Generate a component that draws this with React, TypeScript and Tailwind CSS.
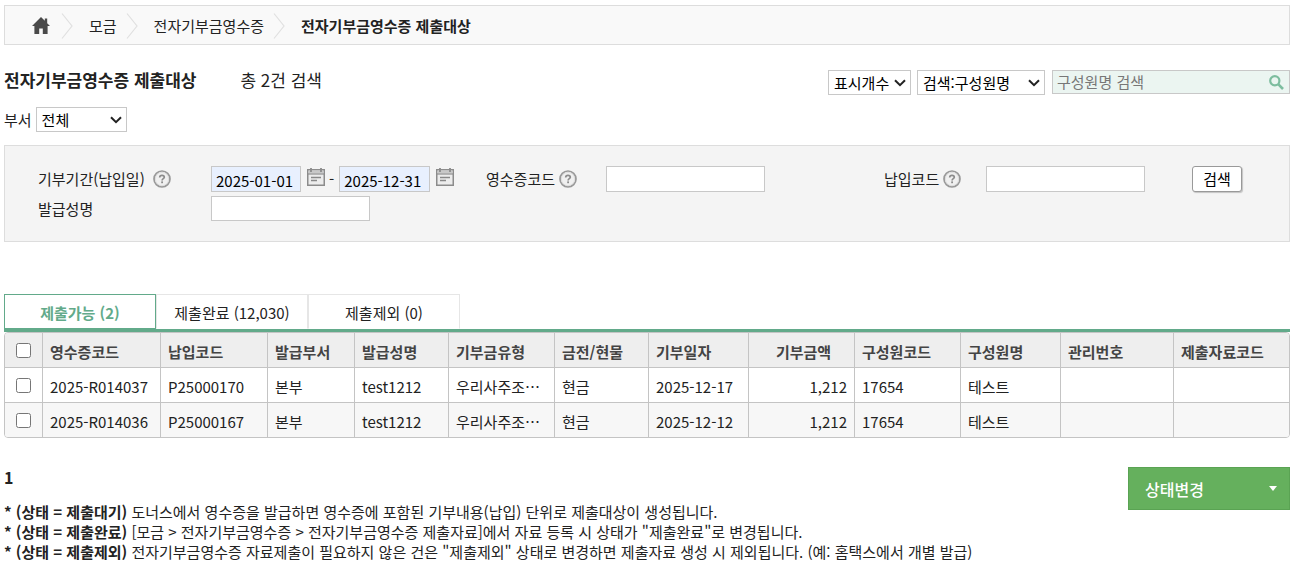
import { useState } from "react";

const columns = [
  { label: "영수증코드", width: "w-[118px]" },
  { label: "납입코드", width: "w-[107px]" },
  { label: "발급부서", width: "w-[87px]" },
  { label: "발급성명", width: "w-[94px]" },
  { label: "기부금유형", width: "w-[106px]" },
  { label: "금전/현물", width: "w-[94px]" },
  { label: "기부일자", width: "w-[100px]" },
  { label: "기부금액", width: "w-[106px]", center: true },
  { label: "구성원코드", width: "w-[106px]" },
  { label: "구성원명", width: "w-[100px]" },
  { label: "관리번호", width: "w-[113px]" },
  { label: "제출자료코드", width: "" },
];

const rows = [
  ["2025-R014037", "P25000170", "본부", "test1212", "우리사주조…", "현금", "2025-12-17", "1,212", "17654", "테스트", "", ""],
  ["2025-R014036", "P25000167", "본부", "test1212", "우리사주조…", "현금", "2025-12-12", "1,212", "17654", "테스트", "", ""],
];

const tabs = ["제출가능 (2)", "제출완료 (12,030)", "제출제외 (0)"];

const notes = [
  {
    status: "제출대기",
    text: "도너스에서 영수증을 발급하면 영수증에 포함된 기부내용(납입) 단위로 제출대상이 생성됩니다.",
  },
  {
    status: "제출완료",
    text: '[모금 > 전자기부금영수증 > 전자기부금영수증 제출자료]에서 자료 등록 시 상태가 "제출완료"로 변경됩니다.',
  },
  {
    status: "제출제외",
    text: '전자기부금영수증 자료제출이 필요하지 않은 건은 "제출제외" 상태로 변경하면 제출자료 생성 시 제외됩니다. (예: 홈택스에서 개별 발급)',
  },
];

const fieldClass = "border border-[#c8c8c8] bg-white px-1 outline-none";
const dateClass = "h-[26px] border border-[#c8c8c8] bg-[#e8f0fe] px-1 pt-0.5 text-black outline-none";

function Select({ id, label, value, className }: { id?: string; label?: string; value: string; className: string }) {
  return (
    <div className={`relative ${className}`}>
      <select
        id={id}
        aria-label={label}
        className="block h-[25px] w-full appearance-none border border-[#c8c8c8] bg-white pl-[5px] text-black outline-none"
      >
        <option>{value}</option>
      </select>
      <svg
        className="pointer-events-none absolute top-[9px] right-[5px] h-2 w-3"
        viewBox="0 0 12 8"
        fill="none"
        stroke="#222"
        strokeWidth="2"
      >
        <path d="M1 1.2 6 6.2 11 1.2" />
      </svg>
    </div>
  );
}

function Chevron() {
  return (
    <svg className="mr-4 ml-[9px] h-[26px] w-3" viewBox="0 0 12 26" fill="none" stroke="#e0e0e0" strokeWidth="1.2">
      <path d="M1 0.5 11 13 1 25.5" />
    </svg>
  );
}

function HelpIcon() {
  return (
    <svg className="size-[18px] shrink-0" viewBox="0 0 18 18" fill="none">
      <circle cx="9" cy="9" r="8" fill="#f0f0f0" stroke="#999" strokeWidth="1.7" />
      <circle cx="9" cy="9" r="6.6" stroke="#dadada" strokeWidth="0.8" />
      <path d="M6.7 7.5C6.7 6 7.6 5.3 9 5.3s2.3.7 2.3 1.9c0 1.5-2.2 1.5-2.2 3.3" stroke="#8c8c8c" strokeWidth="1.7" />
      <rect x="8.2" y="11.4" width="1.8" height="1.8" fill="#8c8c8c" />
    </svg>
  );
}

function CalendarButton({ label }: { label: string }) {
  return (
    <button type="button" aria-label={label} className="mb-1 shrink-0">
      <svg className="block h-[18px] w-[18px]" viewBox="0 0 18 18" fill="none">
        <rect x="0.75" y="1.75" width="16.5" height="15.5" fill="#ececec" stroke="#8c8c8c" strokeWidth="1.5" />
        <path d="M1.5 2.5h15v3h-15z" fill="#c8c8c8" />
        <path d="M1 6h16" stroke="#909090" strokeWidth="1.2" />
        <path d="M4 0v4M14 0v4" stroke="#8c8c8c" strokeWidth="1.8" />
        <path d="M4 9.5h10M4 12.5h6" stroke="#888" strokeWidth="1.5" />
      </svg>
    </button>
  );
}

export default function App() {
  const [tab, setTab] = useState(0);
  const [checked, setChecked] = useState<number[]>([]);

  const toggle = (i: number) =>
    setChecked(checked.includes(i) ? checked.filter((n) => n !== i) : [...checked, i]);

  return (
    <div
      lang="ko"
      className="bg-white pt-[5px] pr-[7px] pl-1 font-['Noto_Sans_CJK_KR',sans-serif] text-[15px] leading-5 text-[#222]"
    >
      <nav className="flex h-10 items-center border border-[#ddd] bg-[#f9f9f9] pt-px pl-[27px]">
        <a href="#" aria-label="홈" className="mr-0.5">
          <svg className="h-[17px] w-[18px]" viewBox="0 0 18 17" fill="#4a4a4a">
            <path d="M9 0 0 9h2.4v8h4.8v-5.4h3.6V17h4.8V9H18l-2.8-2.8V1.6h-2.4v2.2z" />
          </svg>
        </a>
        <Chevron />
        <a href="#">모금</a>
        <Chevron />
        <a href="#">전자기부금영수증</a>
        <Chevron />
        <strong>전자기부금영수증 제출대상</strong>
      </nav>

      <div className="mt-[25px] flex items-start">
        <h1 className="text-[17px] font-bold">전자기부금영수증 제출대상</h1>
        <span className="ml-11 text-[17px]">총 2건 검색</span>
        <div className="ml-auto flex items-start">
          <Select label="표시개수" value="표시개수" className="w-[83px]" />
          <Select label="검색 조건" value="검색:구성원명" className="ml-1.5 w-32" />
          <form
            className="ml-[7px] flex h-6 w-[238px] items-center border border-[#c8c8c8] bg-[#ebf5f1]"
            onSubmit={(e) => e.preventDefault()}
          >
            <input
              type="text"
              aria-label="구성원명 검색"
              placeholder="구성원명 검색"
              className="min-w-0 flex-1 bg-transparent pl-1 outline-none placeholder:text-[#777]"
            />
            <button type="submit" aria-label="검색" className="mr-[5px]">
              <svg className="block size-[15px]" viewBox="0 0 15 15" fill="none" stroke="#7dbd9f">
                <circle cx="5.8" cy="5.8" r="4.6" strokeWidth="2.2" />
                <path d="m9.2 9.2 4.8 4.8" strokeWidth="2.6" />
              </svg>
            </button>
          </form>
        </div>
      </div>

      <div className="mt-3 flex items-center">
        <label htmlFor="dept">부서</label>
        <Select id="dept" value="전체" className="ml-1 w-[91px]" />
      </div>

      <form
        className="mt-[13px] grid grid-cols-[173fr_275fr_120fr_278fr_102fr_206fr_97fr] items-center gap-y-1 border border-[#ddd] bg-[#f4f4f4] py-5 pl-[33px]"
        onSubmit={(e) => e.preventDefault()}
      >
        <div className="flex items-center gap-2">
          <label htmlFor="from">기부기간(납입일)</label>
          <HelpIcon />
        </div>
        <div className="flex items-center">
          <input id="from" defaultValue="2025-01-01" className={`${dateClass} w-[90px]`} />
          <span className="mr-[5px] ml-1.5 flex items-center gap-1">
            <CalendarButton label="시작일 선택" />-
          </span>
          <input aria-label="종료일" defaultValue="2025-12-31" className={`${dateClass} mr-1.5 w-[91px]`} />
          <CalendarButton label="종료일 선택" />
        </div>
        <div className="flex items-center gap-1">
          <label htmlFor="receipt">영수증코드</label>
          <HelpIcon />
        </div>
        <input id="receipt" className={`${fieldClass} h-[26px] w-[159px]`} />
        <div className="flex items-center gap-1">
          <label htmlFor="payment">납입코드</label>
          <HelpIcon />
        </div>
        <input id="payment" className={`${fieldClass} h-[26px] w-[159px]`} />
        <button
          type="submit"
          className="h-[26px] w-[50px] rounded-[3px] border border-[#999] bg-white text-black shadow-[1px_1px_1px_rgba(0,0,0,0.2)]"
        >
          검색
        </button>
        <label htmlFor="issuer">발급성명</label>
        <input id="issuer" className={`${fieldClass} h-[25px] w-[159px]`} />
      </form>

      <div className="mt-[52px] flex border-b-3 border-[#62aa8a]" role="tablist">
        {tabs.map((name, i) => (
          <button
            key={name}
            type="button"
            role="tab"
            aria-selected={tab === i}
            onClick={() => setTab(i)}
            className={`h-[35px] w-[152px] border pt-0.5 ${
              tab === i
                ? "border-[#62aa8a] font-bold text-[#62aa8a]"
                : "border-[#e6e6e6] border-b-transparent text-[#222]"
            }`}
          >
            {name}
          </button>
        ))}
      </div>

      <div className="overflow-hidden rounded border border-[#c4c4c4]">
        <table className="w-full table-fixed border-separate border-spacing-0 text-left">
          <thead className="bg-[#eee] text-[#444]">
            <tr className="h-[35px]">
              <th className="w-[38px] border-r border-b border-[#c4c4c4] text-center">
                <input
                  type="checkbox"
                  aria-label="전체 선택"
                  className="mx-auto block size-[15px]"
                  checked={checked.length === rows.length}
                  onChange={() => setChecked(checked.length === rows.length ? [] : rows.map((_, i) => i))}
                />
              </th>
              {columns.map((c) => (
                <th
                  key={c.label}
                  className={`border-r border-b border-[#c4c4c4] pt-1 font-bold last:border-r-0 ${c.width} ${
                    c.center ? "pl-1 text-center" : "pl-[7px]"
                  }`}
                >
                  {c.label}
                </th>
              ))}
            </tr>
          </thead>
          <tbody>
            {rows.map((row, i) => (
              <tr key={row[0]} className="group h-[35px] last:h-[34px] even:bg-[#f7f7f7]">
                <td className="border-r border-b border-[#c4c4c4] group-last:border-b-0">
                  <input
                    type="checkbox"
                    aria-label={row[0]}
                    className="mx-auto block size-[15px]"
                    checked={checked.includes(i)}
                    onChange={() => toggle(i)}
                  />
                </td>
                {row.map((cell, j) => (
                  <td
                    key={j}
                    className={`truncate border-r border-b border-[#c4c4c4] px-[7px] pt-1 group-last:border-b-0 last:border-r-0 ${
                      columns[j].center ? "text-right" : ""
                    }`}
                  >
                    {cell}
                  </td>
                ))}
              </tr>
            ))}
          </tbody>
        </table>
      </div>

      <div className="mt-[29px] flex items-start">
        <div className="min-w-0 flex-1">
          <strong className="block text-base leading-5">1</strong>
          <ul className="mt-[15px]">
            {notes.map((n) => (
              <li key={n.status}>
                <strong>* (상태 = {n.status})</strong> {n.text}
              </li>
            ))}
          </ul>
        </div>
        <button
          type="button"
          className="flex h-[43px] w-[162px] shrink-0 items-center justify-between border border-[#5aa353] bg-[#65b05d] pr-3 pl-4 text-base font-medium text-white"
        >
          상태변경
          <svg className="h-[5px] w-2" viewBox="0 0 8 5" fill="#fff">
            <path d="M0 0h8L4 5z" />
          </svg>
        </button>
      </div>
    </div>
  );
}
